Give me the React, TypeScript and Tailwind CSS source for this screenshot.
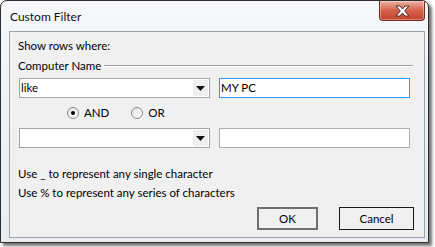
function Caret() {
  return (
    <svg width="9" height="5" viewBox="0 0 9 5" className="block">
      <path d="M0 0h9L4.5 5z" fill="#111" />
    </svg>
  );
}

function Combo({ value }: { value: string }) {
  return (
    <div className="flex h-[20px] w-[191px] items-stretch border border-[#a3a3a3] bg-white">
      <span className="flex-1 pl-[1px] leading-[18px] text-black">{value}</span>
      <span className="my-[1px] mr-[1px] flex w-[15px] items-center justify-center bg-[#efefef]">
        <Caret />
      </span>
    </div>
  );
}

function TextBox({ value, focused }: { value: string; focused?: boolean }) {
  return (
    <div
      className={
        focused
          ? 'h-[20px] w-[191px] border border-[#3399ff] bg-white pl-[1px] leading-[18px] text-black'
          : 'h-[20px] w-[191px] border border-[#abadb3] bg-white pl-[1px] leading-[18px] text-black'
      }
    >
      {value}
    </div>
  );
}

function Radio({ label, checked }: { label: string; checked?: boolean }) {
  return (
    <label className="flex items-center gap-[5px]">
      <span className="flex h-[12px] w-[12px] items-center justify-center rounded-full border border-[#8a8a8a] bg-gradient-to-br from-[#e2e2e2] to-white">
        {checked && <span className="h-[4px] w-[4px] rounded-full bg-black" />}
      </span>
      <span className="leading-[14px] text-black">{label}</span>
    </label>
  );
}

export default function App() {
  return (
    <div className="h-[247px] w-[435px] overflow-hidden bg-white font-['Lato',sans-serif] text-[11.5px]">
      <div className="flex h-[243px] w-[429px] flex-col rounded-t-[7px] border border-[#2e2e2e] bg-gradient-to-b from-[#f6f8fa] via-[#eef1f4] to-[#e9edf1] shadow-[3px_3px_3px_rgba(0,0,0,0.55)]">
        {/* title bar */}
        <div className="flex h-[30px] items-start justify-between">
          <span className="pl-[9px] pt-[7px] text-[12px] leading-[17px] text-[#111]">Custom Filter</span>
          <div className="mr-[3px] flex h-[20px] w-[46px] items-center justify-center rounded-b-[4px] border border-t-0 border-[#7a2a20] bg-gradient-to-b from-[#eab2a4] via-[#d6604a] to-[#c4432e] shadow-[inset_0_0_0_1px_rgba(255,255,255,0.35)]">
            <svg width="17" height="12" viewBox="0 0 17 12">
              <path
                d="M2 1h4l2.5 3L11 1h4l-4.3 5 4.3 5h-4L8.5 8 6 11H2l4.3-5z"
                fill="#fff"
                stroke="#4a2a26"
                strokeWidth="1"
                strokeLinejoin="round"
              />
            </svg>
          </div>
        </div>

        {/* content */}
        <div className="ml-[8px] mr-[3px] flex h-[207px] flex-col border border-[#9ea3a8] bg-[#f0f0f0] px-[8px] pt-[6px] text-black">
          <div className="leading-[15px]">Show rows where:</div>
          <div className="mt-[5px] flex items-center gap-[3px] pr-[3px] leading-[15px]">
            <span>Computer Name</span>
            <span className="flex-1 border-t border-b border-t-[#a0a0a0] border-b-white" />
          </div>

          <div className="mt-[5px] flex gap-[9px] pl-[1px]">
            <Combo value="like" />
            <TextBox value="MY PC" focused />
          </div>

          <div className="mt-[8px] flex gap-[22px] pl-[49px]">
            <Radio label="AND" checked />
            <Radio label="OR" />
          </div>

          <div className="mt-[8px] flex gap-[9px] pl-[1px]">
            <Combo value="" />
            <TextBox value="" />
          </div>

          <div className="mt-[18px] leading-[15px]">Use _ to represent any single character</div>
          <div className="mt-[4px] leading-[15px]">Use % to represent any series of characters</div>

          <div className="mt-[7px] flex justify-end gap-[21px] pr-[2px]">
            <button className="h-[23px] w-[61px] border-2 border-[#6f6f6f] bg-[#f0f0f0] leading-[19px] text-black">
              OK
            </button>
            <button className="h-[23px] w-[75px] border border-[#1a1a1a] bg-[#f0f0f0] leading-[21px] text-black">
              Cancel
            </button>
          </div>
        </div>
      </div>
    </div>
  );
}
